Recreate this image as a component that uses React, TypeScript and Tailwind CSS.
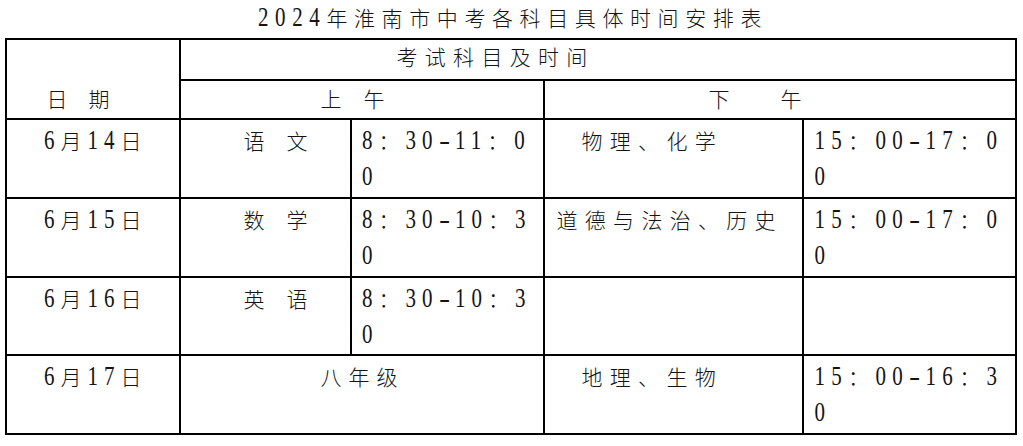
import React from "react";

function T({ s, title = false }: { s: string; title?: boolean }) {
  const parts: React.ReactNode[] = [];
  const re = /(\d+|-|\n|[^\d\-\n]+)/g;
  let m: RegExpExecArray | null;
  let k = 0;
  while ((m = re.exec(s)) !== null) {
    const t = m[0];
    if (t === "\n") parts.push(<br key={k++} />);
    else if (/^\d+$/.test(t))
      parts.push(
        <span
          key={k++}
          className={
            title
              ? "inline-block origin-[50%_26px] scale-y-[1.3]"
              : "inline-block origin-[50%_25px] scale-y-[1.3]"
          }
        >
          {t}
        </span>
      );
    else if (t === "-")
      parts.push(
        <span key={k++} className="inline-block w-[16.5px] origin-[50%_25px] scale-y-[1.3]">
          <span className="inline-block origin-left scale-x-[1.6] tracking-normal">-</span>
        </span>
      );
    else parts.push(<span key={k++}>{t}</span>);
  }
  return <>{parts}</>;
}

const cell = "bg-white whitespace-nowrap leading-[36px]";

export default function App() {
  return (
    <div className="w-[1023px] h-[446px] bg-white text-[21px] text-[#141414] font-light font-['Liberation_Serif','Noto_Sans_CJK_SC',serif]">
      <div className="h-[38px] leading-[38px] pl-[258px] tracking-[6.6px]">
        <T s="2024年淮南市中考各科目具体时间安排表" title />
      </div>
      <div className="ml-[5px] w-[1012px] grid grid-cols-[172px_169px_191px_257px_211px] grid-rows-[39px_37px_77px_77px_76px_77px] gap-[2px] p-[2px] bg-black">
        {/* header */}
        <div className={`${cell} row-span-2 pt-[42px] pl-[39.5px]`}>
          <span>日</span>
          <span className="ml-[21px]">期</span>
        </div>
        <div className={`${cell} col-span-4 pl-[215.5px] tracking-[7.3px]`}>考试科目及时间</div>
        <div className={`${cell} col-span-2 pt-[1px] pl-[139.5px] tracking-[7px]`}>
          <span>上</span>
          <span className="ml-[15px]">午</span>
        </div>
        <div className={`${cell} col-span-2 pt-[1px] pl-[163.5px] tracking-[7px]`}>
          <span>下</span>
          <span className="ml-[44px]">午</span>
        </div>

        {/* 6/14 */}
        <div className={`${cell} pt-[4px] pl-[37px] tracking-[6px]`}>
          <T s="6月14日" />
        </div>
        <div className={`${cell} pt-[4px] pl-[62.5px] tracking-[7px]`}>
          <span>语</span>
          <span className="ml-[15px]">文</span>
        </div>
        <div className={`${cell} pt-[4px] pl-[10px] tracking-[6px]`}>
          <T s={"8：30-11：0\n0"} />
        </div>
        <div className={`${cell} pt-[4px] pl-[36.5px] tracking-[7.3px]`}>物理、化学</div>
        <div className={`${cell} pt-[4px] pl-[10.5px] tracking-[6.3px]`}>
          <T s={"15：00-17：0\n0"} />
        </div>

        {/* 6/15 */}
        <div className={`${cell} pt-[4px] pl-[37px] tracking-[6px]`}>
          <T s="6月15日" />
        </div>
        <div className={`${cell} pt-[4px] pl-[62.5px] tracking-[7px]`}>
          <span>数</span>
          <span className="ml-[15px]">学</span>
        </div>
        <div className={`${cell} pt-[4px] pl-[10px] tracking-[6px]`}>
          <T s={"8：30-10：3\n0"} />
        </div>
        <div className={`${cell} pt-[4px] pl-[11.5px] tracking-[7.3px]`}>道德与法治、历史</div>
        <div className={`${cell} pt-[4px] pl-[10.5px] tracking-[6.3px]`}>
          <T s={"15：00-17：0\n0"} />
        </div>

        {/* 6/16 */}
        <div className={`${cell} pt-[4px] pl-[37px] tracking-[6px]`}>
          <T s="6月16日" />
        </div>
        <div className={`${cell} pt-[4px] pl-[62.5px] tracking-[7px]`}>
          <span>英</span>
          <span className="ml-[15px]">语</span>
        </div>
        <div className={`${cell} pt-[4px] pl-[10px] tracking-[6px]`}>
          <T s={"8：30-10：3\n0"} />
        </div>
        <div className={cell}></div>
        <div className={cell}></div>

        {/* 6/17 */}
        <div className={`${cell} pt-[4px] pl-[37px] tracking-[6px]`}>
          <T s="6月17日" />
        </div>
        <div className={`${cell} col-span-2 pt-[4px] pl-[139.5px] tracking-[7px]`}>八年级</div>
        <div className={`${cell} pt-[4px] pl-[36.5px] tracking-[7.3px]`}>地理、生物</div>
        <div className={`${cell} pt-[4px] pl-[10.5px] tracking-[6.3px]`}>
          <T s={"15：00-16：3\n0"} />
        </div>
      </div>
    </div>
  );
}
